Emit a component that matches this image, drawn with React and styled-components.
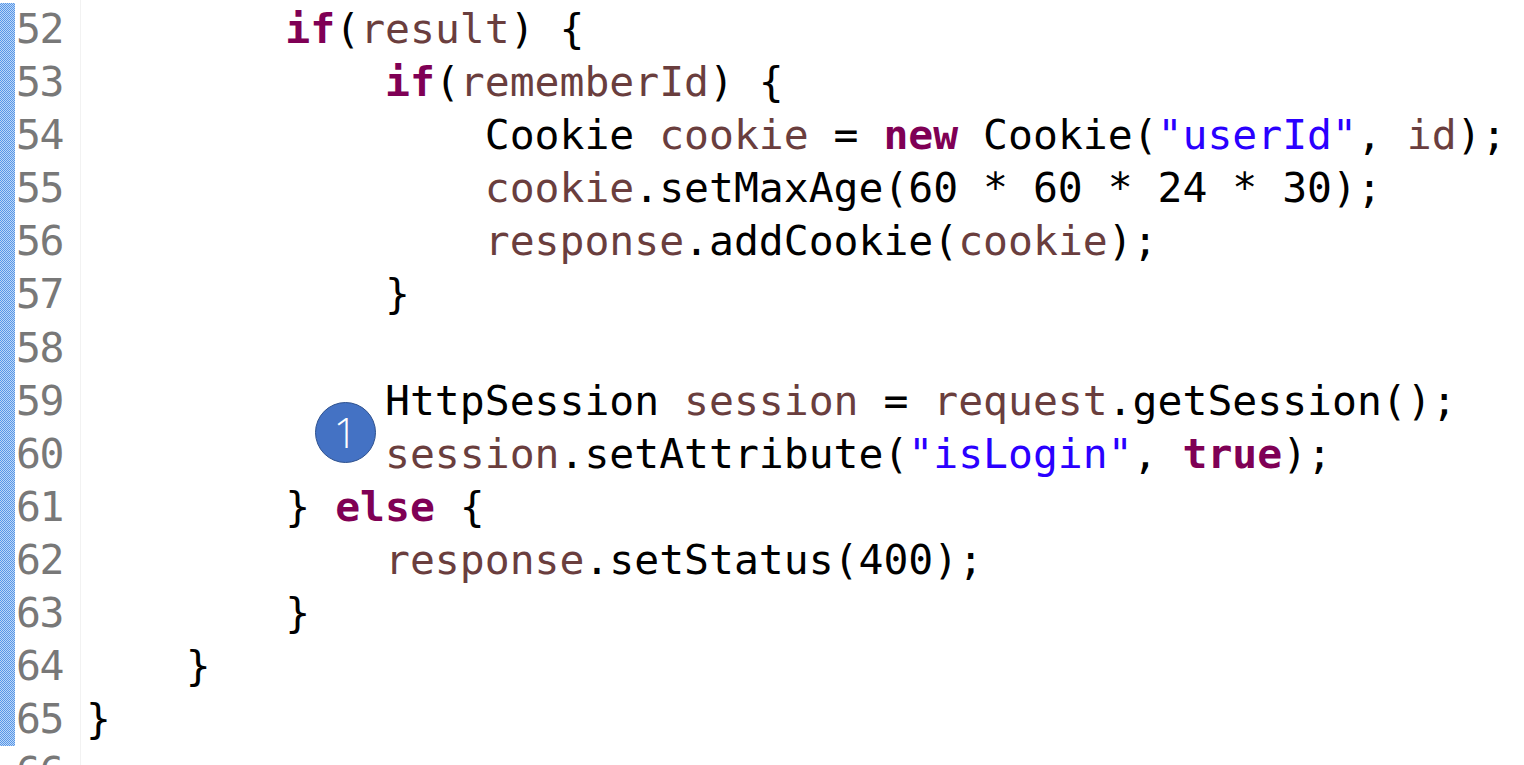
import styled, { createGlobalStyle } from 'styled-components';

const GlobalStyle = createGlobalStyle`
  *, *::before, *::after { box-sizing: border-box; }
  html, body { margin: 0; padding: 0; background: #ffffff; }
  body { height: 765px; overflow: hidden; }
`;

const ROW = 53.1;

const lines = [
  { no: 52, indent: 8, parts: [['k', 'if'], ['', '('], ['v', 'result'], ['', ') {']] },
  { no: 53, indent: 12, parts: [['k', 'if'], ['', '('], ['v', 'rememberId'], ['', ') {']] },
  {
    no: 54,
    indent: 16,
    parts: [['', 'Cookie '], ['v', 'cookie'], ['', ' = '], ['k', 'new'], ['', ' Cookie('], ['s', '"userId"'], ['', ', '], ['v', 'id'], ['', ');']],
  },
  { no: 55, indent: 16, parts: [['v', 'cookie'], ['', '.setMaxAge(60 * 60 * 24 * 30);']] },
  { no: 56, indent: 16, parts: [['v', 'response'], ['', '.addCookie('], ['v', 'cookie'], ['', ');']] },
  { no: 57, indent: 12, parts: [['', '}']] },
  { no: 58, indent: 0, parts: [] },
  { no: 59, indent: 12, parts: [['', 'HttpSession '], ['v', 'session'], ['', ' = '], ['v', 'request'], ['', '.getSession();']] },
  { no: 60, indent: 12, parts: [['v', 'session'], ['', '.setAttribute('], ['s', '"isLogin"'], ['', ', '], ['k', 'true'], ['', ');']] },
  { no: 61, indent: 8, parts: [['', '} '], ['k', 'else'], ['', ' {']] },
  { no: 62, indent: 12, parts: [['v', 'response'], ['', '.setStatus(400);']] },
  { no: 63, indent: 8, parts: [['', '}']] },
  { no: 64, indent: 4, parts: [['', '}']] },
  { no: 65, indent: 0, parts: [['', '}']] },
  { no: 66, indent: 0, parts: [] },
];

const Editor = styled.div`
  position: relative;
  display: flex;
  padding-top: 3px;
  font-family: 'DejaVu Sans Mono', 'Liberation Mono', monospace;
  font-size: 41.4px;
  line-height: ${ROW}px;
`;

/* hatched change marker on the far left */
const Stripe = styled.div`
  width: 15px;
  height: ${ROW * 14}px;
  margin-right: 1px;
  flex-shrink: 0;
  background-color: #8cbaf0;
  background-image: repeating-conic-gradient(#5796e8 0 25%, #bcd7f7 0 50%);
  background-size: 2px 2px;
`;

const Numbers = styled.div`
  width: 64px;
  display: flex;
  flex-direction: column;
`;

const Num = styled.div`
  height: ${ROW}px;
  color: #787878;
  letter-spacing: -1.5px;
`;

const Divider = styled.div`
  width: 1px;
  align-self: stretch;
  background: #f2f2f2;
  margin-top: -3px;
`;

const Code = styled.div`
  display: flex;
  flex-direction: column;
  padding-left: 5px;
`;

const Line = styled.div`
  height: ${ROW}px;
  white-space: pre;
  color: #000000;
`;

const colors = { k: '#7f0055', v: '#6a3e3e', s: '#2a00ff', '': '#000000' };

const Tok = styled.span`
  color: ${(p) => colors[p.$kind]};
  font-weight: ${(p) => (p.$kind === 'k' ? 700 : 400)};
`;

const Badge = styled.div`
  position: absolute;
  left: 315px;
  top: 402px;
  width: 61px;
  height: 61px;
  border-radius: 50%;
  background: #4472c4;
  border: 1.5px solid #2f528f;
  color: #ffffff;
  display: flex;
  align-items: center;
  justify-content: center;
  padding-bottom: 2px;
  font-family: 'Open Sans', 'Liberation Sans', sans-serif;
  font-size: 42px;
  font-weight: 300;
  line-height: 1;
`;

export default function App() {
  return (
    <>
      <GlobalStyle />
      <Editor>
        <Stripe />
        <Numbers>
          {lines.map((l) => (
            <Num key={l.no}>{l.no}</Num>
          ))}
        </Numbers>
        <Divider />
        <Code>
          {lines.map((l) => (
            <Line key={l.no}>
              {' '.repeat(l.indent)}
              {l.parts.map(([kind, text], i) => (
                <Tok key={i} $kind={kind}>
                  {text}
                </Tok>
              ))}
            </Line>
          ))}
        </Code>
        <Badge>1</Badge>
      </Editor>
    </>
  );
}
